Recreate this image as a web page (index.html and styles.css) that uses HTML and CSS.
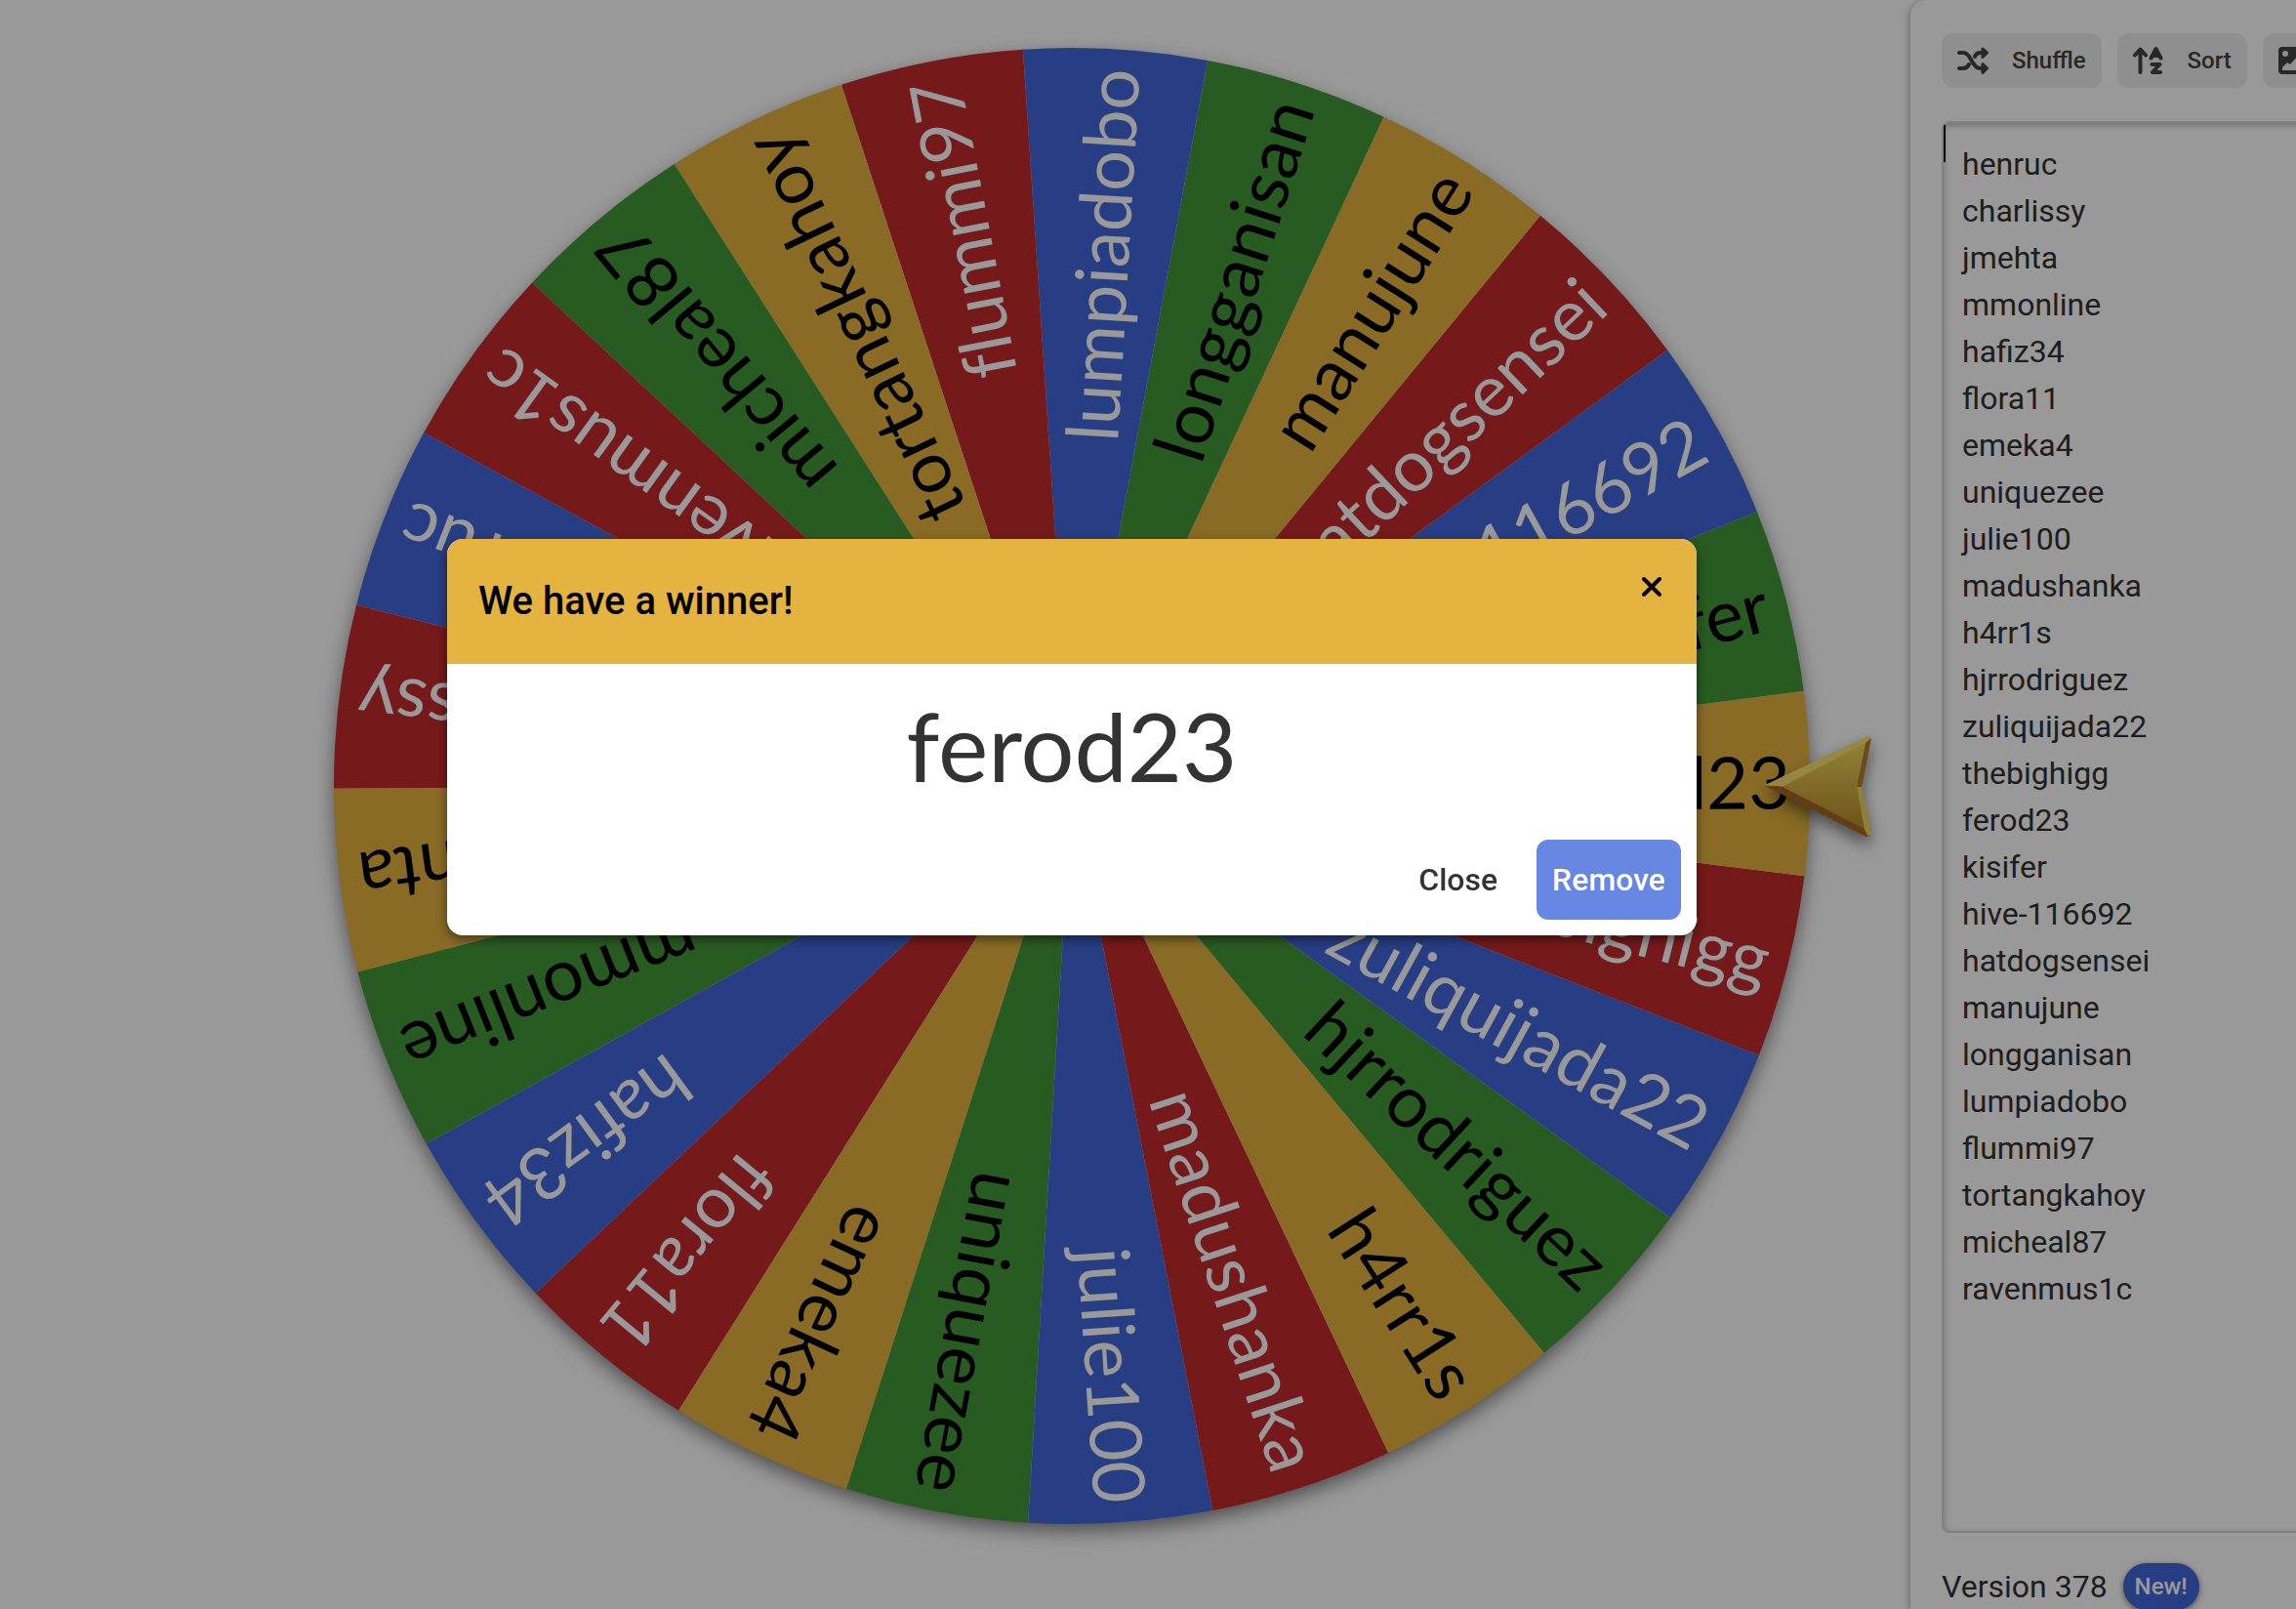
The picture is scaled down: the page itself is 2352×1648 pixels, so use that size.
FILE: index.html
```
<!DOCTYPE html>
<html lang="en">
<head>
    <meta charset="UTF-8">
    <meta name="viewport" content="width=device-width, initial-scale=1.0">
    <title>Wheel of Names</title>
    <link rel="stylesheet" href="styles.css">
</head>
<body>
    <div class="page">
        <main class="stage">
            <svg class="wheel" viewBox="0 0 1512 1512" role="img" aria-label="Wheel of names">
                <defs>
                    <linearGradient id="gold" x1="0" y1="0" x2="0" y2="1">
                        <stop offset="0" stop-color="#f0d85c"/>
                        <stop offset="1" stop-color="#b88c2c"/>
                    </linearGradient>
                </defs>
                <circle class="wheel-disc" cx="756" cy="756" r="755"/>
                <g id="slices"></g>
                <g class="pointer">
                    <path fill="#f8e070" d="M1466 755 L1571 705 L1575 707 L1570 713 L1484 757Z"/>
                    <path fill="#a5681f" d="M1466 756 L1484 757 L1568 799 L1574 807 L1570 808Z"/>
                    <path fill="#b97c25" d="M1575 707 L1565 757 L1560 757 L1569 712Z"/>
                    <path fill="#f0d45a" d="M1565 757 L1575 804 L1572 808 L1567 799 L1560 757Z"/>
                    <path fill="url(#gold)" d="M1484 757 L1569 712 L1560 757 L1568 800Z"/>
                </g>
            </svg>
        </main>

        <aside class="panel">
            <div class="toolbar">
                <button type="button" class="tool">
                    <svg class="icon" viewBox="0 0 32 28" aria-hidden="true">
                        <path d="M2 6h4c4 0 6 3 8 7s5 9 10 9h3M2 22h4c3 0 5-2 6-4M18 10c1-3 3-4 6-4h3" fill="none" stroke="currentColor" stroke-width="4" stroke-linecap="round"/>
                        <path d="M26 2L30.500 6L26 10.500ZM26 17.500L30.500 22L26 26.500Z" fill="currentColor" stroke="currentColor" stroke-width="3" stroke-linejoin="round"/>
                    </svg>
                    Shuffle
                </button>
                <button type="button" class="tool">
                    <svg class="icon" viewBox="0 0 32 28" aria-hidden="true">
                        <path d="M7.500 3v23M2 8.500L7.500 2.500L13 8.500" fill="none" stroke="currentColor" stroke-width="4" stroke-linecap="round" stroke-linejoin="round"/>
                        <path d="M18.500 11.500L23.500 2L28.500 11.500M20.500 9h6M19.500 18h8L20 26h8" fill="none" stroke="currentColor" stroke-width="4" stroke-linecap="round" stroke-linejoin="round"/>
                    </svg>
                    Sort
                </button>
                <button type="button" class="tool" aria-label="Add image">
                    <svg class="icon" viewBox="0 0 32 28" aria-hidden="true">
                        <path fill="currentColor" fill-rule="evenodd" d="M4 0h24a4 4 0 0 1 4 4v20a4 4 0 0 1-4 4H4a4 4 0 0 1-4-4V4a4 4 0 0 1 4-4ZM7 4a3 3 0 1 0 0 6a3 3 0 0 0 0-6ZM4 24h24v-7l-7-9l-9 10l-3-2l-5 5Z"/>
                    </svg>
                </button>
            </div>

            <div class="entries">
                <span class="caret"></span>
                <textarea id="names" class="names" aria-label="Names" spellcheck="false">henruc
charlissy
jmehta
mmonline
hafiz34
flora11
emeka4
uniquezee
julie100
madushanka
h4rr1s
hjrrodriguez
zuliquijada22
thebighigg
ferod23
kisifer
hive-116692
hatdogsensei
manujune
longganisan
lumpiadobo
flummi97
tortangkahoy
micheal87
ravenmus1c</textarea>
            </div>

            <div class="version">
                <span>Version 378</span>
                <a href="#" class="badge">New!</a>
            </div>
        </aside>
    </div>

    <div class="overlay">
        <section class="dialog" role="dialog" aria-modal="true" aria-labelledby="dialogTitle">
            <header class="dialog-header">
                <h2 id="dialogTitle">We have a winner!</h2>
                <button type="button" class="dismiss" aria-label="Dismiss">
                    <svg viewBox="0 0 20 20" aria-hidden="true">
                        <path d="M2 2L18 18M18 2L2 18" stroke="currentColor" stroke-width="4" stroke-linecap="round"/>
                    </svg>
                </button>
            </header>
            <p class="winner">ferod23</p>
            <div class="actions">
                <button type="button" class="btn">Close</button>
                <button type="button" class="btn btn-primary">Remove</button>
            </div>
        </section>
    </div>

    <script src="script.js"></script>
</body>
</html>
```

FILE: styles.css
```
* {
    box-sizing: border-box;
    margin: 0;
    padding: 0;
}

body {
    font-family: Roboto, sans-serif;
    font-size: 32px;
    line-height: 48px;
    color: #333;
    background-color: #fff;
    overflow: hidden;
}

button {
    font-family: inherit;
    border: none;
    cursor: pointer;
}

.page {
    display: grid;
    grid-template-columns: minmax(0, 1fr) 395px;
    height: 100vh;
}

.stage {
    padding: 49px 103px 0 342px;
}

.wheel {
    display: block;
    width: 100%;
    overflow: visible;
}

.wheel-disc {
    fill: #fff;
    filter: drop-shadow(0 8px 10px rgba(0, 0, 0, 0.5));
}

.slice-blue {
    fill: #4368dc;
}

.slice-red {
    fill: #c42b2d;
}

.slice-yellow {
    fill: #e4b340;
}

.slice-green {
    fill: #449839;
}

.slice-name {
    font-family: Lato, sans-serif;
    font-size: 74px;
    font-variant-ligatures: none;
    text-anchor: end;
}

.name-light {
    fill: #fff;
}

.name-dark {
    fill: #000;
}

.pointer {
    filter: drop-shadow(0 8px 8px rgba(0, 0, 0, 0.5));
}

.panel {
    display: flex;
    flex-direction: column;
    padding: 34px 0 0 32px;
    border-top-left-radius: 16px;
    background-color: #fff;
    box-shadow: 0 2px 8px rgba(0, 0, 0, 0.4);
    overflow: hidden;
}

.toolbar {
    display: flex;
    gap: 16px;
    margin-bottom: 34px;
}

.tool {
    display: flex;
    flex-shrink: 0;
    align-items: center;
    gap: 24px;
    height: 56px;
    padding: 0 16px;
    border-radius: 12px;
    background-color: #eee;
    color: #444;
    font-size: 24px;
    font-weight: 500;
}

.icon {
    width: 32px;
    height: 28px;
}

.entries {
    position: relative;
    width: 640px;
}

.names {
    display: block;
    width: 100%;
    height: 1446px;
    padding: 18px 19px;
    border: 2px solid #d8d8d8;
    border-radius: 8px;
    box-shadow: inset 0 2px 6px rgba(0, 0, 0, 0.3);
    color: #333;
    background-color: #fff;
    font: inherit;
    resize: none;
    outline: none;
}

.caret {
    position: absolute;
    top: 4px;
    left: 2px;
    width: 2px;
    height: 38px;
    background-color: #000;
}

.version {
    display: flex;
    align-items: center;
    gap: 16px;
    margin-top: 31px;
}

.badge {
    padding: 0 12px;
    border-radius: 24px;
    background-color: #4368dc;
    box-shadow: 0 2px 6px rgba(0, 0, 0, 0.5);
    color: #fff;
    font-size: 24px;
    font-weight: 500;
    text-decoration: none;
}

.overlay {
    position: fixed;
    inset: 0;
    display: flex;
    align-items: center;
    justify-content: center;
    padding: 0 396px 138px 240px;
    background-color: rgba(0, 0, 0, 0.4);
}

.dialog {
    width: 100%;
    max-width: 1280px;
    border-radius: 16px;
    background-color: #fff;
    box-shadow: 0 4px 12px rgba(0, 0, 0, 0.5);
    overflow: hidden;
}

.dialog-header {
    display: flex;
    justify-content: space-between;
    align-items: flex-start;
    padding: 32px;
    background-color: #e4b340;
    color: #000;
}

.dialog-header h2 {
    font-size: 40px;
    font-weight: 500;
    line-height: 64px;
}

.dismiss {
    display: flex;
    padding: 7px 4px;
    background: none;
    color: #000;
}

.dismiss svg {
    width: 20px;
    height: 20px;
}

.winner {
    padding: 24px 16px 36px;
    font-family: Lato, sans-serif;
    font-size: 97px;
    line-height: 120px;
    text-align: center;
}

.actions {
    display: flex;
    justify-content: flex-end;
    gap: 24px;
    padding: 0 16px 16px;
}

.btn {
    height: 82px;
    padding: 0 16px;
    border-radius: 12px;
    background: none;
    color: #333;
    font-size: 32px;
    font-weight: 500;
}

.btn-primary {
    background-color: #6887e3;
    color: #fff;
}
```

FILE: script.js
```
const SVG_NS = 'http://www.w3.org/2000/svg';
const center = 756;
const radius = 756;
const startAngle = 201.4;
const colors = ['blue', 'red', 'yellow', 'green'];

const slices = document.getElementById('slices');
const names = document.getElementById('names').value.split('\n').filter(name => name.trim());
const step = 360 / names.length;

function rimPoint(angle) {
    const rad = angle * Math.PI / 180;
    return (center + radius * Math.cos(rad)) + ' ' + (center + radius * Math.sin(rad));
}

names.forEach((name, i) => {
    const angle = startAngle - i * step;
    let color = colors[i % colors.length];

    // the last slice must not share a colour with the first one
    if (i === names.length - 1 && color === colors[0]) {
        color = colors[1];
    }

    const path = document.createElementNS(SVG_NS, 'path');
    path.setAttribute('d', `M${center} ${center} L${rimPoint(angle - step / 2)} A${radius} ${radius} 0 0 1 ${rimPoint(angle + step / 2)}Z`);
    path.setAttribute('class', 'slice-' + color);
    slices.appendChild(path);

    const text = document.createElementNS(SVG_NS, 'text');
    const dark = color === 'yellow' || color === 'green';
    text.setAttribute('class', 'slice-name ' + (dark ? 'name-dark' : 'name-light'));
    text.setAttribute('x', center + 736);
    text.setAttribute('y', center);
    text.setAttribute('dy', 26);
    text.setAttribute('transform', `rotate(${angle} ${center} ${center})`);
    text.textContent = name;
    slices.appendChild(text);
});
```
